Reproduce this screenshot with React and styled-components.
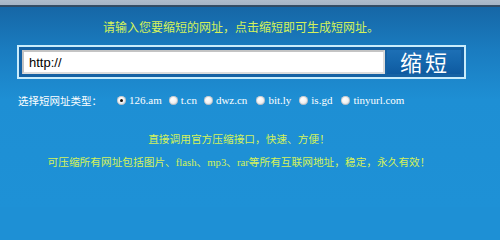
import React from "react";
import styled, { createGlobalStyle } from "styled-components";

const palette = {
  lime: "#d4f25a",
  white: "#ffffff",
  frame: "#1561a3",
  rim: "#c9ecfb",
};

const GlobalStyle = createGlobalStyle`
  html, body {
    margin: 0;
    padding: 0;
    background: #1e90d5;
  }
`;

const Page = styled.div`
  width: 500px;
  height: 207px;
  overflow: hidden;
  font-family: "Noto Sans CJK SC", "Liberation Sans", sans-serif;
  font-size: 12px;
  background: linear-gradient(
    to bottom,
    #afbccb 0,
    #a6b5c6 5px,
    #3a4f63 5px,
    #2e4a66 7px,
    #1667a6 7px,
    #1a7cc0 50px,
    #1e8fd4 100px,
    #1e91d6 207px
  );
`;

const Content = styled.div`
  width: 482px;
  padding-top: 19px;
  display: flex;
  flex-direction: column;
`;

const Headline = styled.div`
  text-align: center;
  color: ${palette.lime};
  line-height: 16px;
  height: 16px;
`;

const Form = styled.form`
  margin: 10px 0 0 17px;
  width: 449px;
  height: 34px;
  box-sizing: border-box;
  border: 2px solid ${palette.rim};
  background: ${palette.frame};
  padding: 3px;
  display: flex;
  gap: 2px;
`;

const UrlInput = styled.input`
  flex: 1;
  min-width: 0;
  box-sizing: border-box;
  height: 24px;
  margin: 0;
  border: 2px solid #dcdcdc;
  border-top-color: #c4c4c4;
  border-left-color: #c4c4c4;
  background: ${palette.white};
  padding: 0 0 0 5px;
  font-family: "Liberation Sans", Arial, sans-serif;
  font-size: 13px;
  color: #000;
  outline: none;
`;

const Submit = styled.button`
  width: 74px;
  height: 24px;
  border: none;
  margin: 0;
  padding: 0 0 2px 2px;
  background: linear-gradient(to bottom, #1d6fb5 0%, #1566ac 50%, #0e5aa0 100%);
  color: ${palette.white};
  font-family: "Noto Sans CJK SC", sans-serif;
  font-size: 22px;
  letter-spacing: 3px;
  line-height: 22px;
  cursor: pointer;
`;

const Types = styled.div`
  margin: 13px 0 0 18px;
  display: flex;
  align-items: center;
  height: 16px;
  color: ${palette.white};
`;

const TypesLabel = styled.span`
  width: 99px;
  flex: none;
  font-size: 10.5px;
`;

const Option = styled.label`
  display: flex;
  align-items: center;
  margin-right: ${(p) => p.$gap}px;
  font-family: "Liberation Serif", "Times New Roman", serif;
  font-size: 11px;
  color: ${palette.white};
  cursor: pointer;
`;

const Dot = styled.span`
  width: 9px;
  height: 9px;
  border-radius: 50%;
  margin-right: 3px;
  background: radial-gradient(circle at 40% 35%, #ffffff 0, #f2f2f2 45%, #b9c3cc 100%);
  box-shadow: inset 0 0 0 1px rgba(120, 130, 140, 0.35);
  display: flex;
  align-items: center;
  justify-content: center;

  &::after {
    content: "";
    width: 3px;
    height: 3px;
    border-radius: 50%;
    background: ${(p) => (p.$on ? "#111" : "transparent")};
  }
`;

const Notes = styled.div`
  margin-top: 23px;
  display: flex;
  flex-direction: column;
  gap: 7px;
  color: ${palette.lime};
  text-align: center;
  padding-right: 4px;
  font-family: "Liberation Serif", "Noto Sans CJK SC", serif;
  font-size: 10.7px;
`;

const Note = styled.div`
  line-height: 16px;
  height: 16px;
`;

const options = [
  { name: "126.am", gap: 7, on: true },
  { name: "t.cn", gap: 7 },
  { name: "dwz.cn", gap: 9 },
  { name: "bit.ly", gap: 8 },
  { name: "is.gd", gap: 9 },
  { name: "tinyurl.com", gap: 0 },
];

const App = () => (
  <Page>
    <GlobalStyle />
    <Content>
      <Headline>请输入您要缩短的网址，点击缩短即可生成短网址。</Headline>
      <Form onSubmit={(e) => e.preventDefault()}>
        <UrlInput defaultValue="http://" />
        <Submit type="submit">缩短</Submit>
      </Form>
      <Types>
        <TypesLabel>选择短网址类型：</TypesLabel>
        {options.map((o) => (
          <Option key={o.name} $gap={o.gap}>
            <Dot $on={o.on} />
            {o.name}
          </Option>
        ))}
      </Types>
      <Notes>
        <Note>直接调用官方压缩接口，快速、方便！</Note>
        <Note>可压缩所有网址包括图片、flash、mp3、rar等所有互联网地址，稳定，永久有效！</Note>
      </Notes>
    </Content>
  </Page>
);

export default App;
